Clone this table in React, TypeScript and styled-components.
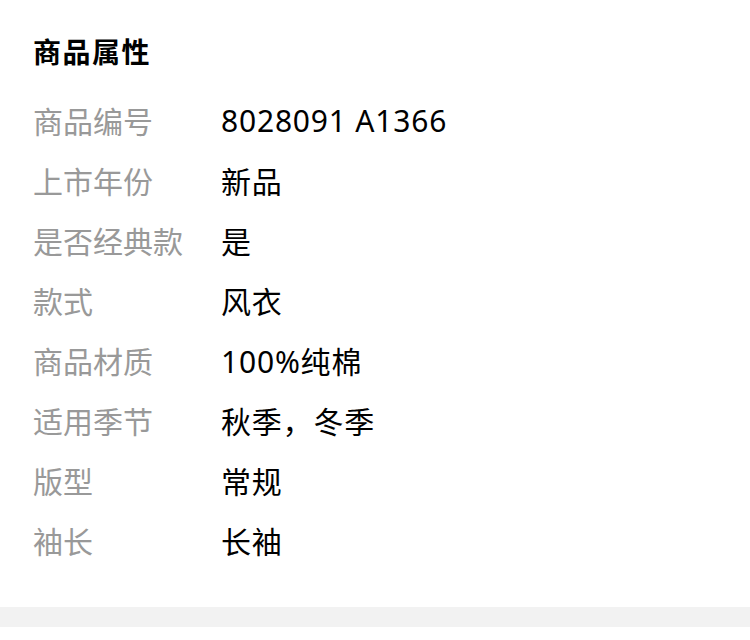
import React from 'react';
import styled, { createGlobalStyle } from 'styled-components';

const GlobalStyle = createGlobalStyle`
  html, body {
    margin: 0;
    padding: 0;
    background: #fff;
  }
  body {
    font-family: "Noto Sans", "Noto Sans CJK SC", sans-serif;
  }
`;

const attrs = [
  { label: '商品编号', value: '8028091 A1366' },
  { label: '上市年份', value: '新品' },
  { label: '是否经典款', value: '是' },
  { label: '款式', value: '风衣' },
  { label: '商品材质', value: '100%纯棉' },
  { label: '适用季节', value: '秋季，冬季' },
  { label: '版型', value: '常规' },
  { label: '袖长', value: '长袖' },
];

const App = () => {
  return (
    <Page>
      <GlobalStyle />
      <Card>
        <Title>商品属性</Title>
        <List>
          {attrs.map((a) => (
            <Row key={a.label}>
              <Label>{a.label}</Label>
              <Value>{a.value}</Value>
            </Row>
          ))}
        </List>
      </Card>
      <Divider />
    </Page>
  );
};

export default App;

const Page = styled.div`
  width: 750px;
  background: #fff;
`;

const Card = styled.section`
  padding: 34px 33px 37px;
`;

const Title = styled.h2`
  margin: 0 0 20px;
  font-size: 28px;
  line-height: 36px;
  font-weight: 700;
  letter-spacing: 1.5px;
  color: #000;
`;

const List = styled.div`
  display: flex;
  flex-direction: column;
`;

const Row = styled.div`
  display: grid;
  grid-template-columns: 188px 1fr;
  align-items: center;
  height: 60px;
  font-size: 30px;
`;

const Label = styled.span`
  color: #999;
`;

const Value = styled.span`
  color: #000;
  letter-spacing: 0.8px;
`;

const Divider = styled.div`
  height: 20px;
  background: #f2f2f2;
`;
